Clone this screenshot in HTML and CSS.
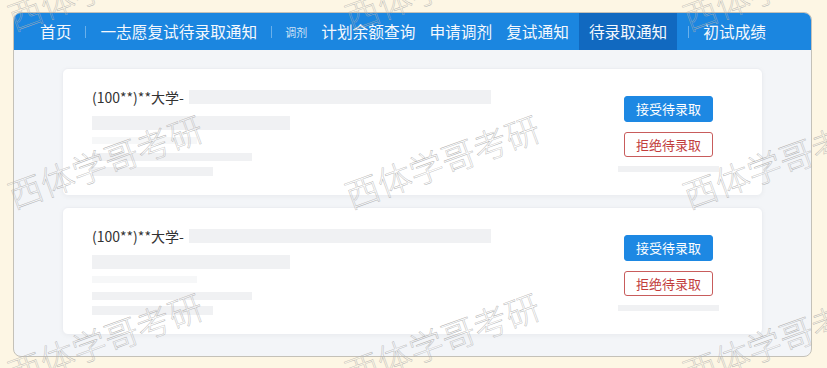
FILE: index.html
```html
<!DOCTYPE html>
<html lang="zh">
<head>
<meta charset="utf-8">
<title>待录取通知</title>
<link rel="stylesheet" href="styles.css">
</head>
<body>
<div class="frame">
  <nav class="nav">
    <a class="nav-item">首页</a>
    <span class="sep"></span>
    <a class="nav-item">一志愿复试待录取通知</a>
    <span class="sep"></span>
    <span class="nav-small">调剂</span>
    <a class="nav-item">计划余额查询</a>
    <a class="nav-item">申请调剂</a>
    <a class="nav-item">复试通知</a>
    <a class="nav-item active">待录取通知</a>
    <span class="sep"></span>
    <a class="nav-item">初试成绩</a>
  </nav>
  <main class="content">
    <section class="card">
      <div class="info">
        <div class="title-row"><span class="school">(100**)**大学-</span><span class="bar bar-title"></span></div>
        <span class="bar bar-2"></span>
        <span class="bar bar-3"></span>
        <span class="bar bar-4"></span>
        <span class="bar bar-5"></span>
      </div>
      <div class="actions">
        <button class="btn btn-accept">接受待录取</button>
        <button class="btn btn-reject">拒绝待录取</button>
        <span class="bar bar-act"></span>
      </div>
    </section>
    <section class="card">
      <div class="info">
        <div class="title-row"><span class="school">(100**)**大学-</span><span class="bar bar-title"></span></div>
        <span class="bar bar-2"></span>
        <span class="bar bar-3"></span>
        <span class="bar bar-4"></span>
        <span class="bar bar-5"></span>
      </div>
      <div class="actions">
        <button class="btn btn-accept">接受待录取</button>
        <button class="btn btn-reject">拒绝待录取</button>
        <span class="bar bar-act"></span>
      </div>
    </section>
  </main>
</div>
<div class="watermarks" aria-hidden="true">
  <span class="wm wm-r1 wm-c1">西体学哥考研</span>
  <span class="wm wm-r1 wm-c2">西体学哥考研</span>
  <span class="wm wm-r1 wm-c3">西体学哥考研</span>
  <span class="wm wm-r2 wm-c1">西体学哥考研</span>
  <span class="wm wm-r2 wm-c2">西体学哥考研</span>
  <span class="wm wm-r2 wm-c3">西体学哥考研</span>
  <span class="wm wm-r3 wm-c1">西体学哥考研</span>
  <span class="wm wm-r3 wm-c2">西体学哥考研</span>
  <span class="wm wm-r3 wm-c3">西体学哥考研</span>
</div>
</body>
</html>
```

FILE: styles.css
```css
* { box-sizing: border-box; }
html, body { margin: 0; padding: 0; }
body {
  background: #fdf6e4;
  font-family: "Noto Sans CJK SC", "Noto Sans", sans-serif;
  width: 827px;
  height: 368px;
  overflow: hidden;
  padding: 12px 15px 0 13px;
}
.frame {
  width: 799px;
  height: 345px;
  border: 1px solid #c4c1b8;
  border-radius: 8px;
  overflow: hidden;
  display: flex;
  flex-direction: column;
  background: #f3f5f8;
}
.nav {
  height: 37px;
  flex: none;
  background: #1b86e0;
  display: flex;
  align-items: stretch;
  padding-left: 19px;
}
.nav-item {
  display: flex;
  align-items: center;
  padding: 0 7px;
  color: #f4f8fd;
  font-size: 15.7px;
  white-space: nowrap;
}
.nav-item.active {
  background: #1169c0;
  padding: 0 10px;
  margin-left: 3px;
  margin-right: 4px;
}
.sep {
  align-self: center;
  width: 1px;
  height: 12px;
  background: rgba(255, 255, 255, 0.35);
  margin: 0 7px;
}
.nav-small {
  display: flex;
  align-items: center;
  font-size: 11px;
  color: #cfe2f6;
  padding: 0 7px 0 6px;
}
.content {
  flex: 1;
  padding: 18px 48px 0 48px;
  display: flex;
  flex-direction: column;
  gap: 11px;
}
.card {
  height: 128px;
  background: #fff;
  border-radius: 6px;
  border: 1px solid #eceef2;
  box-shadow: 0 1px 5px rgba(0, 0, 0, 0.04);
  display: flex;
  justify-content: space-between;
  padding: 20px 43px 0 29px;
}
.info {
  display: flex;
  flex-direction: column;
  align-items: flex-start;
}
.title-row {
  display: flex;
  align-items: center;
  height: 16px;
}
.school {
  font-size: 14px;
  color: #333;
  line-height: 16px;
}
.bar {
  display: block;
  background: #f0f1f3;
}
.bar-title { width: 302px; height: 14px; margin-left: 5px; }
.bar-2 { width: 198px; height: 14px; margin-top: 11px; }
.bar-3 { width: 105px; height: 7px; margin-top: 7px; background: #f6f7f8; }
.bar-4 { width: 160px; height: 8px; margin-top: 9px; }
.bar-5 { width: 121px; height: 9px; margin-top: 6px; }
.actions {
  width: 101px;
  display: flex;
  flex-direction: column;
  align-items: center;
  padding-top: 7px;
}
.btn {
  width: 89px;
  height: 26px;
  border-radius: 3px;
  font-family: "Noto Sans CJK SC", "Noto Sans", sans-serif;
  font-size: 13px;
  padding: 0;
  line-height: 24px;
}
.btn-accept {
  background: #1d88e3;
  border: 1px solid #1d88e3;
  color: #fff;
}
.btn-reject {
  margin-top: 10px;
  height: 25px;
  background: #fff;
  border: 1px solid #c85c5c;
  color: #c23d3d;
}
.bar-act { width: 101px; height: 6px; margin-top: 9px; }
.watermarks {
  position: absolute;
  inset: 0;
  pointer-events: none;
  overflow: hidden;
}
.wm {
  position: absolute;
  font-size: 34px;
  line-height: 34px;
  font-weight: 300;
  white-space: nowrap;
  color: transparent;
  -webkit-text-stroke: 0.4px #b0b0b0;
  transform-origin: 0 100%;
  transform: rotate(-20deg);
}
.wm-r1 { top: 0; }
.wm-r2 { top: 178px; }
.wm-r3 { top: 356px; }
.wm-c1 { left: 15px; }
.wm-c2 { left: 352px; }
.wm-c3 { left: 690px; }
```
